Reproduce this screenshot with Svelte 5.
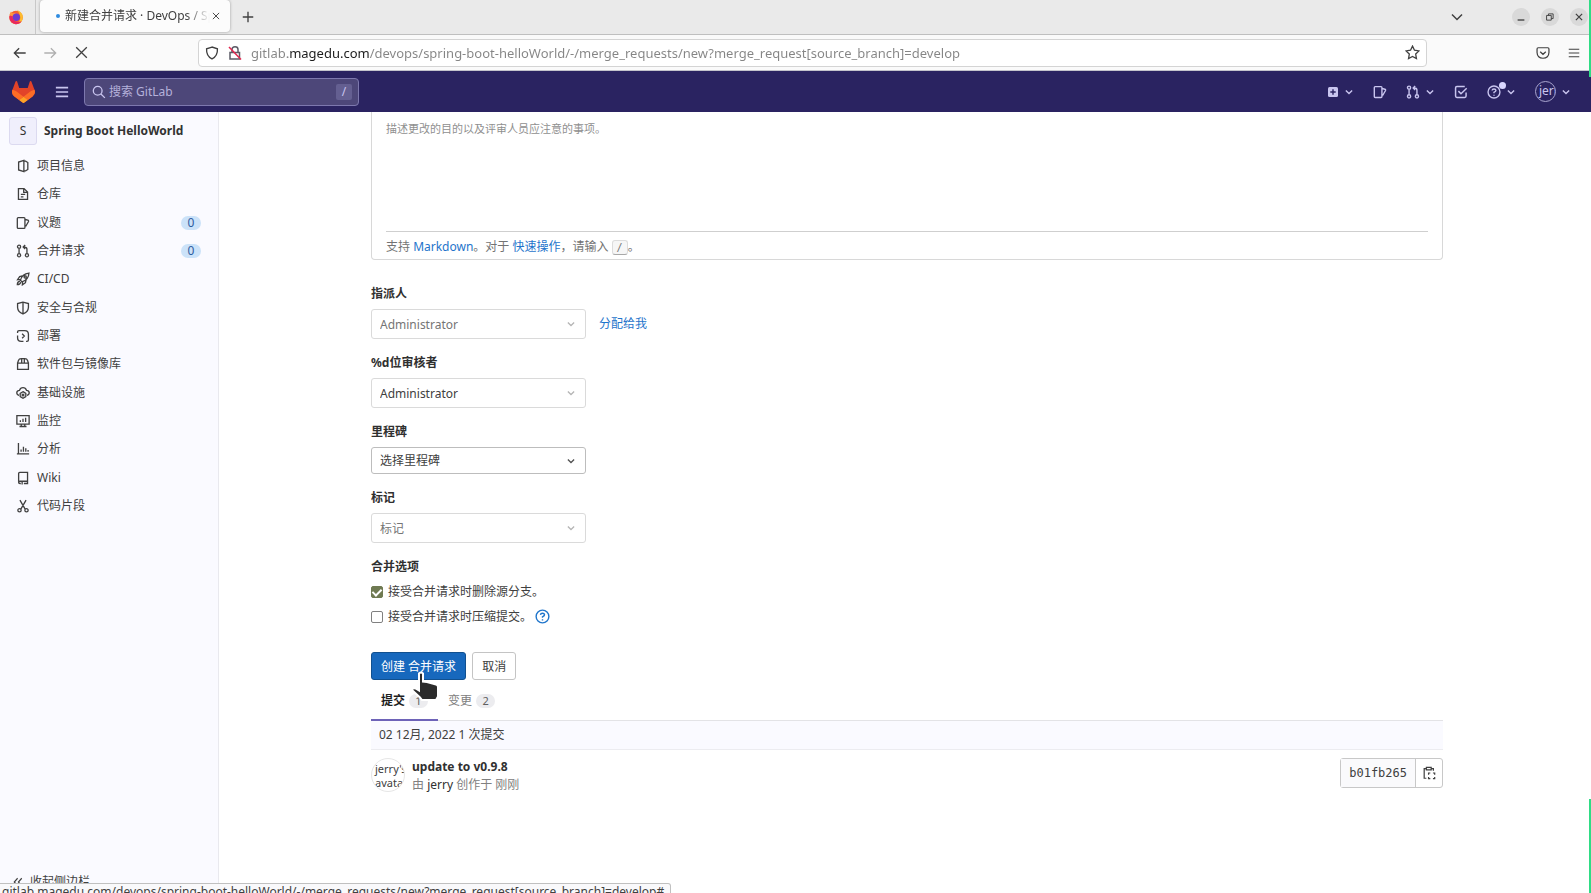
<!--
  New merge request page of the GitLab project, shown inside a browser window:
  tab strip and address bar on top, then the GitLab header, the project
  sidebar and the lower half of the merge request form.
-->
<script lang="ts">
	type NavItem = { label: string; icon: string; count?: number };

	const navItems: NavItem[] = [
		{ label: '项目信息', icon: 'project' },
		{ label: '仓库', icon: 'doc' },
		{ label: '议题', icon: 'issues', count: 0 },
		{ label: '合并请求', icon: 'merge', count: 0 },
		{ label: 'CI/CD', icon: 'rocket' },
		{ label: '安全与合规', icon: 'shield' },
		{ label: '部署', icon: 'deploy' },
		{ label: '软件包与镜像库', icon: 'package' },
		{ label: '基础设施', icon: 'cloud' },
		{ label: '监控', icon: 'monitor' },
		{ label: '分析', icon: 'chart' },
		{ label: 'Wiki', icon: 'book' },
		{ label: '代码片段', icon: 'snippet' }
	];

	// 16x16 outlines, drawn with a stroke
	const icons: Record<string, string> = {
		project: 'M9 1.5 3 3.5v9l6 2zM9 2.5h2l2.5 1.5v8L11 13.5H9',
		doc: 'M2.8 1.8h6.4l4 4v8.4H2.8zM8.8 2v4.2h4M5.5 8.5h5M5.5 11.2h3',
		issues: 'M2.5 1.8h6.7q1 0 1 1v10.4q0 1-1 1H2.5q-1 0-1-1V2.8q0-1 1-1zM10.5 4l3 .8q1.2.4.8 1.5L11 12',
		merge: 'M3.5 5v6M12.5 11V6q0-2.5-2.5-2.5H8.5M10.5 1.2 8.2 3.5l2.3 2.3M3.5 1.3a1.8 1.8 0 1 0 0 3.6 1.8 1.8 0 1 0 0-3.6M3.5 11.1a1.8 1.8 0 1 0 0 3.6 1.8 1.8 0 1 0 0-3.6M12.5 11.1a1.8 1.8 0 1 0 0 3.6 1.8 1.8 0 1 0 0-3.6',
		rocket: 'M5 9.5Q7 2 14.8 1.2 14.5 9 6.8 11.2zM5.3 8.5 1.8 8.8l2.4-3.5 3-.8M7.5 11l-.2 3.7 3.5-2.5.8-3.4M4.5 10.5Q1.5 11 1.5 14.5 4.8 14.5 5.5 11.5M10.5 4.3a1.3 1.3 0 1 0 0 2.6 1.3 1.3 0 1 0 0-2.6',
		shield: 'M8 1.3 1.8 3v4.5Q2 12.5 8 14.8 14 12.5 14.2 7.5V3zM8 1.5v13',
		deploy: 'M1.8 4.5v-1q0-1.7 1.7-1.7H10q4.2 0 4.2 4.2v6.5q0 1.7-1.7 1.7h-1M1.8 7.5V10q0 4.2 4.2 4.2h2.5M7 5.5 9.5 8 7 10.5',
		package: 'M1.8 7h12.4v7.2H1.8zM1.8 7l1-3Q3.5 1.8 6 1.8h4q2.5 0 3.2 2.2l1 3M6.5 2v5M9.5 2v5',
		cloud: 'M3.5 10.8Q.8 10 .9 7.6 1.2 5 4 5 5 1.8 8 1.8T12 5q2.8 0 3.1 2.6.1 2.4-2.6 3.2M8 6.5l3.2 1.9v3.7L8 14l-3.2-1.9V8.4zM8 9.3a1 1 0 1 0 0 2 1 1 0 1 0 0-2',
		monitor: 'M1 1.8h14v9.7H1zM4 14.3h8M6 11.5v2.8M10 11.5v2.8M5 9V7M8 9V5.5M11 9V4.3',
		chart: 'M2.8 1v12.5M1 13.5h14M5.8 11V8.5M8.5 11V5.5M11.2 11V7M13.8 11V9',
		book: 'M3 12.2V2.8q0-1.3 1.3-1.3h8.9v10.2H4.5Q3 11.7 3 13t1.5 1.3h1M13.2 11.7v2.6H9M7 12v3.5',
		snippet: 'M4.5 1.2l5.8 10M11.5 1.2l-5.8 10M4 11a1.9 1.9 0 1 0 0 3.8A1.9 1.9 0 1 0 4 11M12 11a1.9 1.9 0 1 0 0 3.8A1.9 1.9 0 1 0 12 11',
		todo: 'M13.8 8.5v4.2q0 1.5-1.5 1.5H3.3q-1.5 0-1.5-1.5V3.3q0-1.5 1.5-1.5h9M5 7l3 3 6.5-6.2',
		help: 'M8 1.2a6.8 6.8 0 1 0 0 13.6A6.8 6.8 0 1 0 8 1.2M5.8 6.3Q6 4.5 8 4.5t2.2 1.7Q10.2 7.3 8 8.3v1M8 11v1.3',
		search: 'M6.5 1.5a5 5 0 1 0 0 10 5 5 0 1 0 0-10M10.2 10.2l4.5 4.5',
		menu: 'M1 3h14M1 8h14M1 13h14',
		chevron: 'M3 5.5 8 10.5l5-5',
		close: 'M3 3l10 10M13 3 3 13',
		plus: 'M8 1v14M1 8h14',
		back: 'M14.5 8h-13M7 2.5 1.5 8 7 13.5',
		forward: 'M1.5 8h13M9 2.5 14.5 8 9 13.5',
		guard: 'M8 1.2 1.8 3.2Q1.3 11.5 8 14.8 14.7 11.5 14.2 3.2z',
		star: 'M8 1.2l2.1 4.4 4.8.7-3.5 3.4.8 4.8L8 12.2l-4.2 2.3.8-4.8L1.1 6.3l4.8-.7z',
		pocket: 'M2.5 2h11q1.3 0 1.3 1.3V7.5Q14.5 14 8 14T1.2 7.5V3.3Q1.2 2 2.5 2zM4.8 6.5 8 9.5l3.2-3',
		minimize: 'M3.5 12h9',
		restore: 'M2.5 5.5h7.5v7.5H2.5zM5.5 5.5V3h7.5v7.5h-3',
		clipboard: 'M5 3H2.5v11H5M10.5 3H13v2.5M5 1.5h5.5V4.5H5zM7.5 10V8H9.5M12.5 8h2v2M14.5 12.5v2h-2M9.5 14.5h-2v-2',
		collapse: 'M7.5 3 3 8l4.5 5M13 3 8.5 8l4.5 5'
	};

	const pageUrl =
		'gitlab.magedu.com/devops/spring-boot-helloWorld/-/merge_requests/new?merge_request[source_branch]=develop';

	let description = $state('');
	let removeSource = $state(true);
	let squash = $state(false);
</script>

{#snippet icon(name: string, size = 14, weight = 1.5)}
	<svg
		class="icon"
		width={size}
		height={size}
		viewBox="0 0 16 16"
		fill="none"
		stroke="currentColor"
		stroke-width={weight}
		aria-hidden="true"
	>
		<path d={icons[name]} />
	</svg>
{/snippet}

{#snippet dropdown(id: string, text: string, tone: string)}
	<div class="dropdown {tone}">
		<select {id}>
			<option>{text}</option>
		</select>
		{@render icon('chevron', 10, 2)}
	</div>
{/snippet}

<div class="window">
	<div class="tab-strip">
		<div class="pinned-tab">
			<svg width="16" height="16" viewBox="0 0 16 16" aria-hidden="true">
				<circle cx="8" cy="8.5" r="6.8" fill="#f8622f" />
				<path d="M9 .8Q15.5 4 14.8 9.5 13.5 15 8 15.3 12.5 13 12.3 8 12 4.5 9 .8z" fill="#fdbd2f" />
				<path d="M1.5 6Q2 3.5 3 2.5l1.5 1.8L8 4Q5.5 5.5 6 8z" fill="#ff9640" />
				<circle cx="8.3" cy="8.3" r="3.7" fill="#6d3bd0" />
				<path d="M1.4 7Q1 13.5 7.5 15.3q4.5 0 6-3Q9 14 6 11.5 4 9.5 4.5 7z" fill="#e9285f" />
			</svg>
		</div>
		<div class="tab">
			<span class="loading-dot"></span>
			<span class="tab-title">新建合并请求 · DevOps / Spring</span>
			<button class="bare" type="button" aria-label="Close tab">{@render icon('close', 10, 1.5)}</button>
		</div>
		<button class="bare new-tab" type="button" aria-label="New tab">{@render icon('plus', 12, 1.8)}</button>
		<div class="window-controls">
			<button class="bare list-tabs" type="button" aria-label="List tabs">{@render icon('chevron', 16, 1.5)}</button>
			<button class="bare round" type="button" aria-label="Minimize">{@render icon('minimize', 12, 1.8)}</button>
			<button class="bare round" type="button" aria-label="Restore">{@render icon('restore', 10, 1.5)}</button>
			<button class="bare round" type="button" aria-label="Close">{@render icon('close', 10, 2)}</button>
		</div>
	</div>

	<div class="toolbar">
		<div class="history">
			<button class="bare" type="button" aria-label="Back">{@render icon('back', 14, 1.5)}</button>
			<button class="bare faded" type="button" aria-label="Forward">{@render icon('forward', 14, 1.5)}</button>
			<button class="bare" type="button" aria-label="Stop">{@render icon('close', 17, 1.2)}</button>
		</div>
		<div class="address">
			{@render icon('guard', 14, 1.5)}
			<svg class="icon" width="14" height="16" viewBox="0 0 14 16" fill="none" aria-hidden="true">
				<path d="M3 7.5h8.5V14H2V7.5zM4 7.5V4.5Q4 1.8 7 1.8t3 2.7v3" stroke="#5b5b66" stroke-width="1.5" />
				<path d="M1 2l12 12.5" stroke="#e22850" stroke-width="1.5" />
			</svg>
			<input type="text" value={pageUrl} aria-label="Address" />
			<button class="bare" type="button" aria-label="Bookmark">{@render icon('star', 15, 1.4)}</button>
		</div>
		<div class="tools">
			<button class="bare" type="button" aria-label="Pocket">{@render icon('pocket', 14, 1.4)}</button>
			<button class="bare" type="button" aria-label="Menu">{@render icon('menu', 12, 1.6)}</button>
		</div>
	</div>

	<header class="navbar">
		<a class="brand" href="#home" aria-label="GitLab">
			<svg width="23" height="22" viewBox="0 0 25 24" aria-hidden="true">
				<path fill="#e24329" d="m24.507 9.5-.034-.09L21.082.562a.896.896 0 0 0-1.694.091l-2.29 7.01H7.825L5.535.653a.898.898 0 0 0-1.694-.09L.451 9.411.416 9.5a6.297 6.297 0 0 0 2.09 7.278l.012.01.03.022 5.16 3.867 2.56 1.935 1.554 1.176a1.051 1.051 0 0 0 1.268 0l1.555-1.176 2.56-1.935 5.197-3.89.014-.01A6.297 6.297 0 0 0 24.507 9.5Z" />
				<path fill="#fc6d26" d="m24.507 9.5-.034-.09a11.44 11.44 0 0 0-4.56 2.051l-7.447 5.632 4.742 3.584 5.197-3.89.014-.01A6.297 6.297 0 0 0 24.507 9.5Z" />
				<path fill="#fca326" d="m7.707 20.677 2.56 1.935 1.555 1.176a1.051 1.051 0 0 0 1.268 0l1.555-1.176 2.56-1.935-4.743-3.584-4.755 3.584Z" />
				<path fill="#fc6d26" d="M5.01 11.461a11.43 11.43 0 0 0-4.56-2.05L.416 9.5a6.297 6.297 0 0 0 2.09 7.278l.012.01.03.022 5.16 3.867 4.745-3.584-7.444-5.632Z" />
			</svg>
		</a>
		<button class="bare" type="button" aria-label="Toggle menu">{@render icon('menu', 14, 1.8)}</button>
		<div class="search">
			{@render icon('search', 14, 1.5)}
			<input type="search" placeholder="搜索 GitLab" aria-label="搜索 GitLab" />
			<kbd>/</kbd>
		</div>
		<nav class="nav-actions" aria-label="User">
			<a href="#new" aria-label="New">
				<svg width="12" height="12" viewBox="0 0 12 12" aria-hidden="true">
					<rect x="1" y="1" width="10" height="10" rx="1.5" fill="currentColor" />
					<path d="M6 3.3v5.4M3.3 6h5.4" stroke="#2a2361" stroke-width="1.4" />
				</svg>
				{@render icon('chevron', 10, 2.2)}
			</a>
			<a href="#issues" aria-label="Issues">{@render icon('issues', 14, 1.6)}</a>
			<a href="#merge-requests" aria-label="Merge requests">
				{@render icon('merge', 14, 1.6)}
				{@render icon('chevron', 10, 2.2)}
			</a>
			<a href="#todos" aria-label="To-do">{@render icon('todo', 14, 1.7)}</a>
			<a class="help" href="#help" aria-label="Help">
				{@render icon('help', 14, 1.6)}
				<span class="dot"></span>
				{@render icon('chevron', 10, 2.2)}
			</a>
			<a href="#profile" aria-label="Profile">
				<span class="user">jerry</span>
				{@render icon('chevron', 10, 2.2)}
			</a>
		</nav>
	</header>

	<div class="page">
		<aside>
			<a class="project" href="#project">
				<span class="project-avatar">S</span>
				<strong>Spring Boot HelloWorld</strong>
			</a>
			<nav class="side-nav" aria-label="Project">
				{#each navItems as item (item.label)}
					<a href="#{item.icon}">
						{@render icon(item.icon)}
						<span>{item.label}</span>
						{#if item.count !== undefined}
							<span class="count">{item.count}</span>
						{/if}
					</a>
				{/each}
			</nav>
			<button class="bare collapse" type="button">
				{@render icon('collapse', 12, 1.5)}
				收起侧边栏
			</button>
		</aside>

		<main>
			<form onsubmit={(event) => event.preventDefault()}>
				<div class="editor">
					<textarea
						bind:value={description}
						placeholder="描述更改的目的以及评审人员应注意的事项。"
						aria-label="描述"
					></textarea>
					<p class="hint">
						支持 <a href="#markdown">Markdown</a>。对于 <a href="#quick-actions">快速操作</a>，请输入
						<kbd>/</kbd>。
					</p>
				</div>

				<div class="field">
					<label for="assignee">指派人</label>
					<div class="row">
						{@render dropdown('assignee', 'Administrator', 'muted')}
						<a href="#assign">分配给我</a>
					</div>
				</div>
				<div class="field">
					<label for="reviewer">%d位审核者</label>
					{@render dropdown('reviewer', 'Administrator', '')}
				</div>
				<div class="field">
					<label for="milestone">里程碑</label>
					{@render dropdown('milestone', '选择里程碑', 'strong')}
				</div>
				<div class="field">
					<label for="labels">标记</label>
					{@render dropdown('labels', '标记', 'muted')}
				</div>

				<fieldset>
					<legend>合并选项</legend>
					<label class="check">
						<input type="checkbox" bind:checked={removeSource} />
						接受合并请求时删除源分支。
					</label>
					<div class="check">
						<input id="squash" type="checkbox" bind:checked={squash} />
						<label for="squash">接受合并请求时压缩提交。</label>
						<a href="#squash-help" aria-label="Help">{@render icon('help', 15, 1.5)}</a>
					</div>
				</fieldset>

				<div class="actions">
					<button class="primary" type="submit">创建 合并请求</button>
					<button class="secondary" type="button">取消</button>
					<svg class="pointer" width="30" height="32" viewBox="0 0 30 32" aria-hidden="true">
						<path
							d="M9 2.5q2-2 4 0v8l4 .5 9 2.5q2 .5 2 2.500v9.500l-2 3.500H12l-2-2.500-7.500-7q-.5-3 3-2l3.500 2z"
							fill="#2b2b2b"
							stroke="#fff"
							stroke-width="2"
						/>
					</svg>
				</div>
			</form>

			<div class="tabs" role="tablist">
				<button class="bare active" type="button" role="tab" aria-selected="true">
					提交 <span class="badge">1</span>
				</button>
				<button class="bare" type="button" role="tab" aria-selected="false">
					变更 <span class="badge">2</span>
				</button>
			</div>

			<div class="commit-day">02 12月, 2022 1 次提交</div>
			<div class="commit">
				<span class="author-avatar">jerry's avatar</span>
				<div class="commit-text">
					<a class="commit-title" href="#commit">update to v0.9.8</a>
					<p>由 <a href="#jerry">jerry</a> 创作于 刚刚</p>
				</div>
				<div class="sha">
					<span>b01fb265</span>
					<button class="bare" type="button" aria-label="Copy commit SHA">
						{@render icon('clipboard', 14, 1.4)}
					</button>
				</div>
			</div>
		</main>
	</div>

	<div class="status">{pageUrl}#</div>
	<span class="edge top"></span>
	<span class="edge bottom"></span>
</div>

<style>
	:global(body) {
		overflow: hidden;
		background: #fff;
	}
	.window {
		position: relative;
		display: flex;
		flex-direction: column;
		height: 100vh;
		overflow: hidden;
		font: 12px/16px 'Noto Sans', 'Noto Sans CJK SC', sans-serif;
		color: #404040;
	}
	.window * {
		box-sizing: border-box;
	}
	.icon {
		flex: none;
		display: block;
	}
	a {
		color: #1f75cb;
		text-decoration: none;
	}
	p {
		margin: 0;
	}
	button,
	input,
	select,
	textarea {
		font: inherit;
		color: inherit;
		margin: 0;
	}
	.bare {
		display: inline-flex;
		align-items: center;
		justify-content: center;
		padding: 0;
		border: 0;
		background: none;
		cursor: pointer;
	}

	/* browser chrome */
	.tab-strip {
		display: flex;
		align-items: center;
		flex: none;
		height: 35px;
		border-bottom: 1px solid #bfbfbf;
		background: #eaeaea;
	}
	.pinned-tab {
		display: flex;
		align-items: center;
		align-self: stretch;
		width: 36px;
		padding-left: 8px;
		border-right: 1px solid #c8c8c8;
	}
	.tab {
		display: flex;
		align-items: center;
		gap: 5px;
		width: 190px;
		height: 32px;
		margin: 0 12px 2px 4px;
		padding: 0 9px 0 16px;
		border-radius: 4px;
		background: #fcfcfc;
		box-shadow: 0 0 3px #00000055;
	}
	.tab .bare {
		margin-left: -4px;
	}
	.loading-dot {
		flex: none;
		width: 4px;
		height: 4px;
		border-radius: 50%;
		background: #2f8be0;
	}
	.tab-title {
		flex: 1;
		overflow: hidden;
		white-space: nowrap;
		mask-image: linear-gradient(to left, transparent, #000 24px);
	}
	.new-tab {
		width: 12px;
	}
	.window-controls {
		display: flex;
		align-items: center;
		gap: 11px;
		margin-left: auto;
		padding-right: 3px;
	}
	.list-tabs {
		margin-right: 36px;
	}
	.round {
		width: 18px;
		height: 18px;
		border-radius: 50%;
		background: #d9d9d9;
	}
	.toolbar {
		display: flex;
		align-items: center;
		flex: none;
		height: 36px;
		border-bottom: 1px solid #c4c4cc;
		background: #fafafa;
	}
	.history {
		display: flex;
		align-items: center;
		gap: 16px;
		width: 198px;
		padding-left: 13px;
	}
	.faded {
		opacity: 0.4;
	}
	.address {
		display: flex;
		align-items: center;
		flex: 1;
		gap: 9px;
		height: 28px;
		padding: 0 6px;
		border: 1px solid #d4d4d4;
		border-radius: 4px;
		background: #fff;
	}
	/* the domain part of the address is darker than the rest */
	.address input {
		flex: 1;
		min-width: 0;
		padding: 0;
		border: 0;
		outline: 0;
		font-size: 13px;
		color: transparent;
		background: linear-gradient(to right, #858585 37px, #1c1c1c 37px 118px, #858585 118px);
		background-clip: text;
	}
	.tools {
		display: flex;
		align-items: center;
		justify-content: flex-end;
		gap: 18px;
		width: 164px;
		padding-right: 11px;
	}

	/* GitLab header */
	.navbar {
		display: flex;
		align-items: center;
		flex: none;
		height: 41px;
		padding: 0 20px 0 12px;
		background: #2a2361;
		color: #c9c5ef;
	}
	.brand {
		margin-right: 20px;
		line-height: 0;
	}
	.search {
		display: flex;
		align-items: center;
		gap: 3px;
		width: 275px;
		height: 28px;
		margin-left: 15px;
		padding: 0 6px 0 7px;
		border: 1px solid #7d78ae;
		border-radius: 4px;
		background: #4d4779;
	}
	.search input {
		flex: 1;
		min-width: 0;
		padding: 0;
		border: 0;
		outline: 0;
		background: none;
	}
	.search input::placeholder {
		color: #b5b1da;
	}
	.search kbd {
		width: 16px;
		border-radius: 2px;
		background: #645f91;
		font: inherit;
		text-align: center;
	}
	.nav-actions {
		display: flex;
		align-items: center;
		gap: 19px;
		margin-left: auto;
	}
	.nav-actions a {
		display: flex;
		align-items: center;
		gap: 5px;
		color: inherit;
	}
	.help {
		position: relative;
	}
	.dot {
		position: absolute;
		top: -3px;
		left: 12px;
		width: 7px;
		height: 7px;
		border-radius: 50%;
		background: #d9d6ff;
	}
	.user {
		width: 21px;
		height: 21px;
		padding-left: 3px;
		overflow: hidden;
		border: 1px solid #a9a5cf;
		border-radius: 50%;
		line-height: 18px;
	}

	/* sidebar */
	.page {
		display: flex;
		flex: 1;
		min-height: 0;
	}
	aside {
		display: flex;
		flex-direction: column;
		flex: none;
		width: 219px;
		padding-top: 5px;
		border-right: 1px solid #e9e9ee;
		background: #fafaff;
	}
	.project {
		display: flex;
		align-items: center;
		gap: 7px;
		padding-left: 9px;
		color: #333;
	}
	.project-avatar {
		width: 28px;
		height: 28px;
		border: 1px solid #dcdaf0;
		border-radius: 3px;
		background: #f0effc;
		line-height: 26px;
		text-align: center;
	}
	.side-nav {
		display: grid;
		grid-auto-rows: 1fr;
		height: 368px;
		margin-top: 7px;
	}
	.side-nav a {
		display: flex;
		align-items: center;
		gap: 7px;
		padding: 0 17px 0 16px;
		color: #404040;
	}
	.count {
		width: 20px;
		height: 14px;
		margin-left: auto;
		border-radius: 7px;
		background: #cbe2f9;
		color: #2f5ca0;
		line-height: 14px;
		text-align: center;
	}
	.collapse {
		justify-content: flex-start;
		gap: 6px;
		margin: auto 0 3px;
		padding-left: 12px;
	}

	/* form */
	main {
		flex: 1;
		min-width: 0;
		padding: 0 148px 0 152px;
	}
	.editor {
		padding: 0 14px;
		border: 1px solid #d8d8d8;
		border-top: 0;
		border-radius: 0 0 4px 4px;
	}
	textarea {
		display: block;
		width: 100%;
		height: 120px;
		padding: 9px 0 0;
		border: 0;
		border-bottom: 1px solid #cfcfcf;
		outline: 0;
		resize: none;
		background: none;
		font-size: 11px;
	}
	textarea::placeholder {
		color: #8f8f8f;
	}
	.hint {
		padding: 7px 0 4px;
		color: #737373;
	}
	.hint kbd {
		display: inline-block;
		width: 16px;
		height: 15px;
		border: 1px solid #dcdcdc;
		border-bottom-color: #a8a8a8;
		border-radius: 3px;
		background: #f6f6f6;
		font: 10px/13px 'DejaVu Sans Mono', monospace;
		text-align: center;
	}
	.editor + .field {
		margin-top: 24px;
	}
	.field {
		margin-top: 14px;
	}
	.field > label,
	legend {
		display: block;
		margin-bottom: 5px;
		padding: 0;
		color: #303030;
		font-weight: 700;
		line-height: 20px;
	}
	.row {
		display: flex;
		align-items: center;
		gap: 13px;
	}
	.dropdown {
		display: grid;
		grid-template-columns: 1fr 10px;
		align-items: center;
		width: 215px;
		height: 30px;
		padding-right: 9px;
		border: 1px solid #dadada;
		border-radius: 3px;
		color: #404040;
	}
	.dropdown select {
		grid-area: 1 / 1 / 2 / 3;
		width: 100%;
		padding: 1px 8px 0;
		border: 0;
		outline: 0;
		appearance: none;
		background: none;
	}
	.dropdown .icon {
		grid-area: 1 / 2;
		color: #b5b5b5;
		pointer-events: none;
	}
	.dropdown.muted {
		color: #757575;
	}
	.dropdown.strong {
		height: 27px;
		border-color: #bdbdbd;
	}
	.dropdown.strong .icon {
		color: #505050;
	}
	fieldset {
		margin: 14px 0 0;
		padding: 0;
		border: 0;
	}
	legend {
		margin-bottom: 2px;
	}
	.check {
		display: flex;
		align-items: center;
		gap: 5px;
		height: 25px;
	}
	.check a {
		margin-left: -2px;
	}
	.check input {
		display: grid;
		place-items: center;
		width: 12px;
		height: 12px;
		border: 1px solid #808080;
		border-radius: 2px;
		appearance: none;
		background: #fff;
	}
	.check input:checked {
		border-color: #6f7a52;
		background: #6f7a52;
	}
	.check input:checked::before {
		content: '';
		width: 4px;
		height: 7px;
		margin-bottom: 2px;
		border: solid #fff;
		border-width: 0 2px 2px 0;
		transform: rotate(45deg);
	}
	.actions {
		position: relative;
		display: flex;
		gap: 6px;
		margin-top: 23px;
	}
	.actions button {
		height: 28px;
		padding: 1px 9px 0;
		border: 1px solid #c4c4c4;
		border-radius: 3px;
		background: #fff;
	}
	.actions .primary {
		border-color: #11508f;
		background: #1768bd;
		color: #fff;
	}
	.pointer {
		position: absolute;
		top: 19px;
		left: 39px;
	}

	/* commits */
	.tabs {
		display: flex;
		height: 41px;
		border-bottom: 1px solid #e3e3e6;
	}
	.tabs button {
		gap: 4px;
		height: 41px;
		padding: 3px 10px 0;
		border-bottom: 2px solid transparent;
		color: #808080;
	}
	.tabs .active {
		border-bottom-color: #6e63b8;
		color: #1f1f1f;
		font-weight: 700;
	}
	.badge {
		width: 19px;
		height: 14px;
		border-radius: 7px;
		background: #ececef;
		color: #606060;
		font-size: 11px;
		font-weight: 400;
		line-height: 14px;
	}
	.commit-day {
		padding: 6px 8px;
		border-bottom: 1px solid #ececf0;
		background: #fafaff;
	}
	.commit {
		display: flex;
		gap: 7px;
		padding-top: 8px;
	}
	.author-avatar {
		width: 34px;
		height: 34px;
		padding: 3px 0 0 3px;
		overflow: hidden;
		border: 1px solid #e6e6e6;
		border-radius: 50%;
		font-size: 11px;
		line-height: 14px;
	}
	.commit-text {
		flex: 1;
		color: #808080;
		line-height: 18px;
	}
	.commit-text a {
		color: #303030;
	}
	.commit-title {
		font-weight: 700;
	}
	.sha {
		display: flex;
		height: 30px;
		border: 1px solid #c8c8c8;
		border-radius: 3px;
	}
	.sha span {
		padding: 0 8px;
		border-right: 1px solid #c8c8c8;
		background: #fafafc;
		font: 12px/28px 'DejaVu Sans Mono', monospace;
	}
	.sha button {
		width: 26px;
	}

	/* link preview and screen edge */
	.status {
		position: absolute;
		left: 0;
		bottom: -8px;
		height: 18px;
		padding: 0 6px 0 2px;
		border: 1px solid #c0c0c0;
		border-left: 0;
		border-radius: 0 3px 0 0;
		background: #f9f9fb;
		white-space: nowrap;
	}
	.edge {
		position: absolute;
		right: 0;
		width: 2px;
		background: #2fdc85;
	}
	.edge.top {
		top: 0;
		height: 77px;
	}
	.edge.bottom {
		bottom: 0;
		height: 94px;
	}
</style>
